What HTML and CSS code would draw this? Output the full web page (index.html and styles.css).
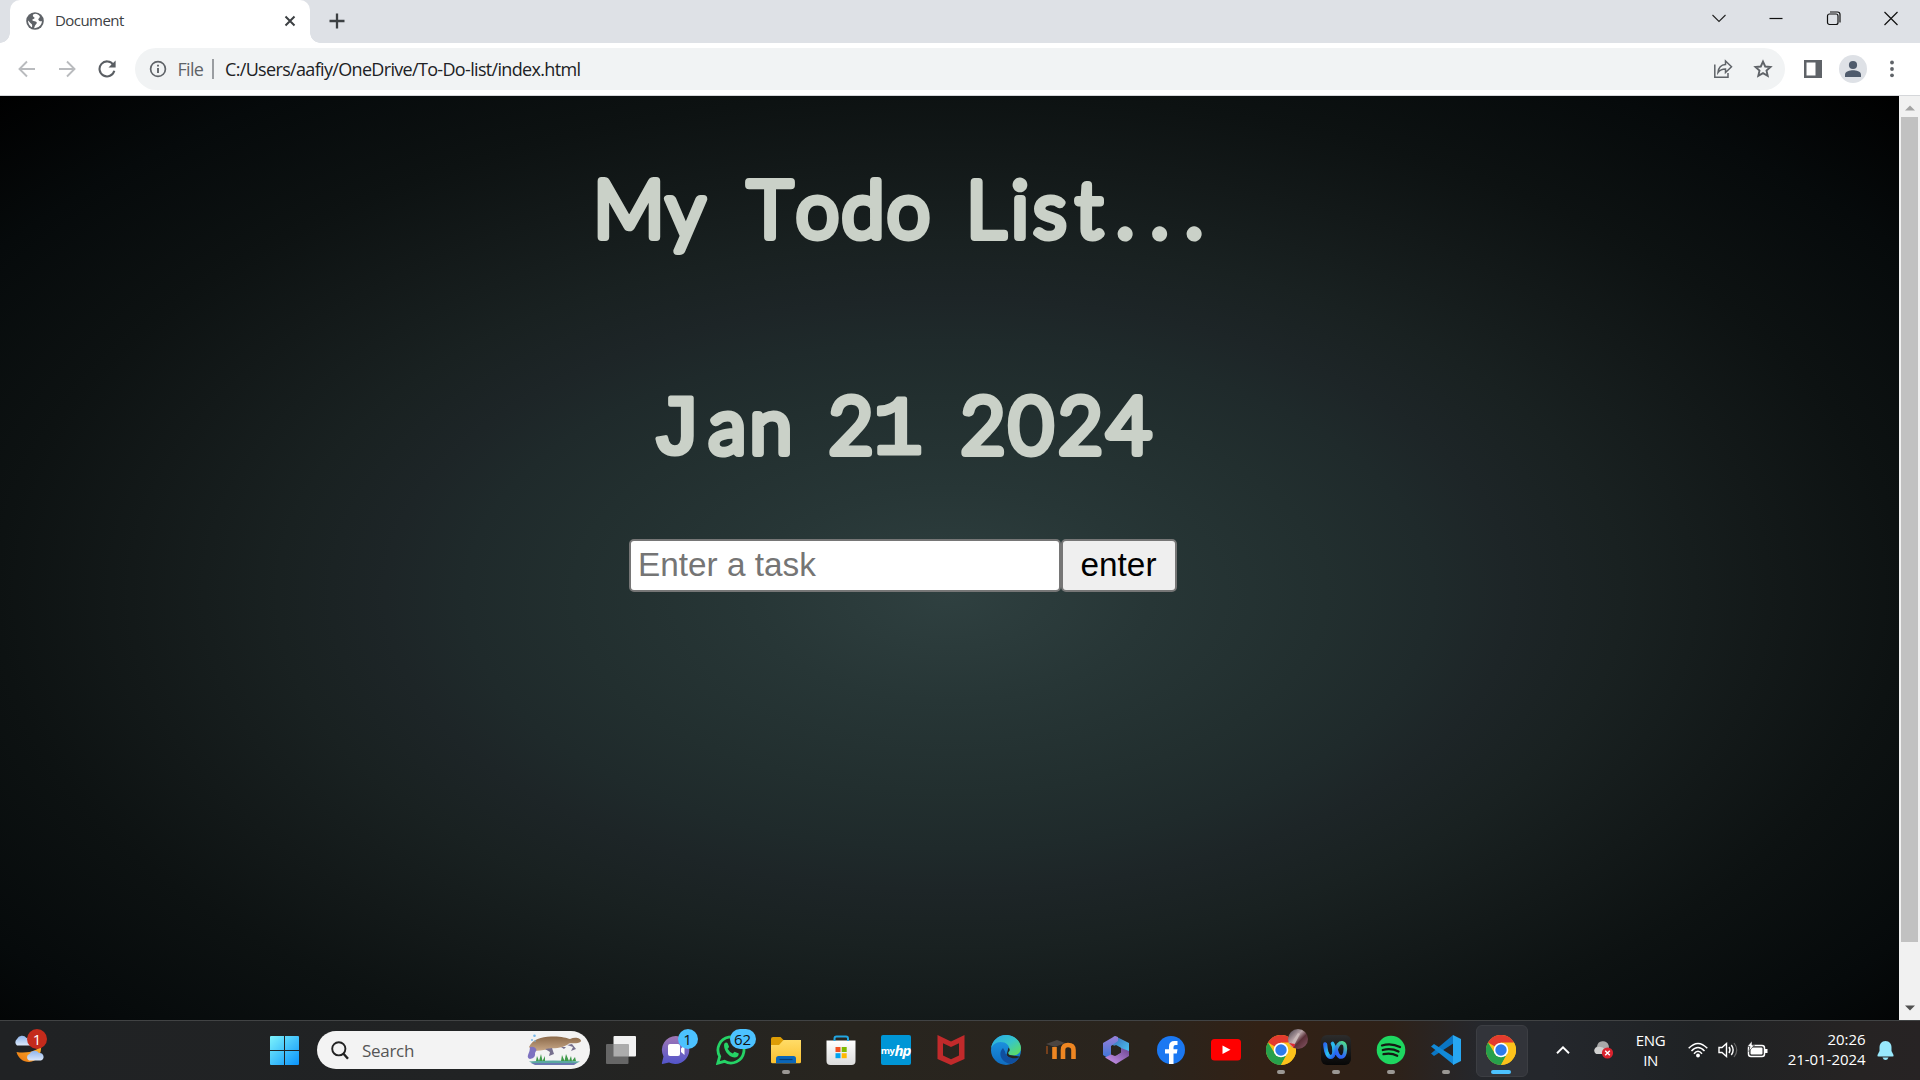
FILE: index.html
```html
<!DOCTYPE html>
<html lang="en">
<head>
<meta charset="utf-8">
<title>Document</title>
<link rel="stylesheet" href="styles.css">
</head>
<body>
<svg class="defs" width="0" height="0" aria-hidden="true">
  <defs>
    <linearGradient id="gWin" x1="0" y1="0" x2="1" y2="1"><stop offset="0" stop-color="#7df3fb"/><stop offset="1" stop-color="#0a93fb"/></linearGradient>
    <linearGradient id="gCloud" x1="0" y1="0" x2="0" y2="1"><stop offset="0" stop-color="#8eb4ea"/><stop offset="1" stop-color="#dce8fa"/></linearGradient>
    <linearGradient id="gMoon" x1="1" y1="0" x2="0" y2="1"><stop offset="0" stop-color="#ffb92e"/><stop offset="1" stop-color="#e87512"/></linearGradient>
    <linearGradient id="gTeams" x1="0" y1="0" x2="0" y2="1"><stop offset="0" stop-color="#a177b4"/><stop offset="1" stop-color="#5255cb"/></linearGradient>
    <linearGradient id="gFolder" x1="0" y1="0" x2="0" y2="1"><stop offset="0" stop-color="#ffdc68"/><stop offset="1" stop-color="#fbc02e"/></linearGradient>
    <linearGradient id="gStore" x1="0" y1="0" x2="0" y2="1"><stop offset="0" stop-color="#fff"/><stop offset="1" stop-color="#dcdcdc"/></linearGradient>
    <linearGradient id="gEdgeTop" x1="0" y1="0" x2="1" y2="1"><stop offset="0" stop-color="#28a8e8"/><stop offset=".5" stop-color="#37c6c8"/><stop offset="1" stop-color="#66e04c"/></linearGradient>
    <linearGradient id="gEdgeLeft" x1="0" y1="0" x2="0" y2="1"><stop offset="0" stop-color="#1e9be6"/><stop offset="1" stop-color="#0f6cc0"/></linearGradient>
    <linearGradient id="gOffL" x1="0" y1="0" x2="0" y2="1"><stop offset="0" stop-color="#9a7fd8"/><stop offset="1" stop-color="#3a76d8"/></linearGradient>
    <linearGradient id="gOffT" x1="0" y1="0" x2="1" y2="1"><stop offset="0" stop-color="#3a66b4"/><stop offset="1" stop-color="#4cc8f4"/></linearGradient>
    <linearGradient id="gOffB" x1="0" y1="1" x2="1" y2="0"><stop offset="0" stop-color="#d09af0"/><stop offset="1" stop-color="#6a4590"/></linearGradient>
    <linearGradient id="gTile" x1="0" y1="0" x2="0" y2="1"><stop offset="0" stop-color="#2c2c2c"/><stop offset="1" stop-color="#070707"/></linearGradient>
    <linearGradient id="gWebexA" x1="0" y1="0" x2="1" y2="1"><stop offset="0" stop-color="#2a6cf0"/><stop offset=".5" stop-color="#2ac4ea"/><stop offset="1" stop-color="#2458f0"/></linearGradient>
    <linearGradient id="gWebexB" x1="0" y1="1" x2="1" y2="0"><stop offset="0" stop-color="#2458f0"/><stop offset=".5" stop-color="#2f6cf6"/><stop offset="1" stop-color="#4fe08a"/></linearGradient>
    <linearGradient id="gAvatar" x1="0" y1="0" x2="1" y2="1"><stop offset="0" stop-color="#3a3540"/><stop offset=".4" stop-color="#b8a4a8"/><stop offset=".6" stop-color="#5a3038"/><stop offset="1" stop-color="#8a5a6a"/></linearGradient>
    <linearGradient id="gBody" x1="0" y1="0" x2="0" y2="1"><stop offset="0" stop-color="#8a6848"/><stop offset="1" stop-color="#c8a888"/></linearGradient>
    <symbol id="chrome" viewBox="0 0 30 30">
      <circle cx="15" cy="15" r="15" fill="#fbc116"/>
      <path d="M15 15 2 7.500A15 15 0 0 1 28 7.500Z" fill="#e33b2e"/>
      <path d="M2 7.500A15 15 0 0 0 15 30L21.200 18.600 15 15 8.900 18.600Z" fill="#27a04b"/>
      <path d="M15 7.500H28A15 15 0 0 1 15 30L21.500 18.700Z" fill="#fcc21b"/>
      <circle cx="15" cy="15" r="7.300" fill="#fff"/><circle cx="15" cy="15" r="5.700" fill="#2d7bea"/>
    </symbol>
  </defs>
</svg>

<div class="screen">
  <header class="tabstrip">
    <div class="tab">
      <svg class="globe" width="18" height="18" viewBox="0 0 18 18"><circle cx="9" cy="9" r="8.800" fill="#5f6368"/><path d="M9.500 1.800C6.500 2 6.200 4 8 5.300 9.500 6.300 7.800 7 6.500 7.500 5.500 8 7 9 8.800 9.200 11 9.500 11.500 11 10 12.200 8.500 13.400 9 14.500 8 16.200 12.500 16 16 13 15.900 9 15 9.500 13.200 9.500 12.500 8 11.800 6.500 14 6.500 13.800 4.300 12.800 3 11 2 9.500 1.800ZM2 8.500C2 11.500 4 14.500 6 15.300 6.300 13.500 6.500 12.600 5 11.500 3.600 10.400 3.500 9.300 2 8.500Z" fill="#fff"/></svg>
      <span class="tab-title">Document</span>
      <svg class="tab-close" width="12" height="12" viewBox="0 0 12 12"><path d="M1.500 1.500 10.500 10.500M10.500 1.500 1.500 10.500" stroke="#3c4043" stroke-width="2"/></svg>
    </div>
    <svg class="newtab" width="16" height="16" viewBox="0 0 16 16"><path d="M8 .5V15.500M.5 8H15.500" stroke="#3c4043" stroke-width="2.300"/></svg>
    <div class="winbtns">
      <svg width="16" height="16" viewBox="0 0 16 16"><path d="M1.500 5 8 11.500 14.500 5" fill="none" stroke="#222" stroke-width="1.100"/></svg>
      <svg width="16" height="16" viewBox="0 0 16 16"><path d="M1.500 8.500H14.500" stroke="#111" stroke-width="1.200"/></svg>
      <svg width="16" height="16" viewBox="0 0 16 16"><rect x="1.500" y="4" width="10.500" height="10.500" rx="2" fill="none" stroke="#111" stroke-width="1.200"/><path d="M4 2H11.500Q14 2 14 4.500V12.500" fill="none" stroke="#111" stroke-width="1.200"/></svg>
      <svg width="16" height="16" viewBox="0 0 16 16"><path d="M1.500 2 14.500 15M14.500 2 1.500 15" stroke="#111" stroke-width="1.200"/></svg>
    </div>
  </header>

  <div class="toolbar">
    <svg class="nav" width="18" height="18" viewBox="0 0 18 18"><path d="M17 9H2M9 1.500 1.500 9 9 16.500" fill="none" stroke="#b9bbbe" stroke-width="1.900"/></svg>
    <svg class="nav" width="18" height="18" viewBox="0 0 18 18"><path d="M1 9H16M9 1.500 16.500 9 9 16.500" fill="none" stroke="#b9bbbe" stroke-width="1.900"/></svg>
    <svg class="nav" width="18" height="18" viewBox="0 0 18 18"><path d="M15.300 4.800A7.500 7.500 0 1 0 16.300 10.800" fill="none" stroke="#5a5e63" stroke-width="2.100"/><path d="M17.600.5V7.600H10.500Z" fill="#5a5e63"/></svg>
    <div class="omnibox">
      <svg width="18" height="18" viewBox="0 0 18 18"><circle cx="9" cy="9" r="7.400" fill="none" stroke="#5f6368" stroke-width="1.700"/><path d="M9 8V13M9 4.800V6.600" stroke="#5f6368" stroke-width="1.900"/></svg>
      <span class="scheme">File</span>
      <span class="bar"></span>
      <span class="url">C:/Users/aafiy/OneDrive/To-Do-list/index.html</span>
      <svg class="share" width="20" height="20" viewBox="0 0 20 20"><path d="M1.800 5.500V18.200H15V14" fill="none" stroke="#5f6368" stroke-width="1.500"/><path d="M5 13.500C5.500 8.500 8 5.900 12.500 5.600V2L18.500 7.800 12.500 13.500V9.900C9.500 9.900 7 10.800 5 13.500Z" fill="none" stroke="#5f6368" stroke-width="1.500"/></svg>
      <svg class="star" width="20" height="20" viewBox="0 0 20 20"><path d="M10 2.600 12.200 7.500 17.500 8 13.500 11.600 14.700 16.900 10 14.100 5.300 16.900 6.500 11.600 2.500 8 7.800 7.500Z" fill="none" stroke="#5f6368" stroke-width="1.900"/></svg>
    </div>
    <svg class="panel" width="18" height="18" viewBox="0 0 18 18"><path fill-rule="evenodd" d="M0 0H18V18H0ZM2.500 2.500V15.500H11.500V2.500Z" fill="#5f6368"/></svg>
    <svg class="avatar" width="28" height="28" viewBox="0 0 28 28"><circle cx="14" cy="14" r="14" fill="#dee1e6"/><circle cx="14" cy="10" r="4.100" fill="#4f5b6c"/><path d="M6 22V19.500C6 16.500 11 15.300 14 15.300S22 16.500 22 19.500V22Z" fill="#4f5b6c"/></svg>
    <svg class="dots" width="4" height="18" viewBox="0 0 4 18"><g fill="#5f6368"><circle cx="2" cy="2.500" r="1.900"/><circle cx="2" cy="9" r="1.900"/><circle cx="2" cy="15.300" r="1.900"/></g></svg>
  </div>

  <div class="viewport">
    <main class="page">
      <h1 class="title"><svg width="640" height="130" viewBox="580 160 640 130"><text class="hand" y="236.500" x="629 685.500 720 770 817.500 863 908.500 940 986 1020 1050 1089 1125 1159.500 1194"><tspan class="em">M</tspan>y Todo List...</text></svg></h1>
      <h2 class="date"><svg width="640" height="130" viewBox="580 380 640 130"><text class="hand" y="453" x="676 727.500 771 800 851 898 930 983 1031 1080.500 1129"><tspan class="barred">J</tspan>an 2<tspan class="barred one">1</tspan> 2024</text></svg></h2>
      <div class="form">
        <input class="task" type="text" placeholder="Enter a task">
        <button class="enter">enter</button>
      </div>
    </main>
    <div class="scrollbar">
      <svg width="10" height="6" viewBox="0 0 10 6"><path d="M0 5.500 5 .5 10 5.500Z" fill="#a3a3a3"/></svg>
      <div class="thumb"></div>
      <svg class="down" width="10" height="6" viewBox="0 0 10 6"><path d="M0 .5 5 5.500 10 .5Z" fill="#505050"/></svg>
    </div>
  </div>

  <footer class="taskbar">
    <div class="widgets">
      <svg width="36" height="36" viewBox="0 0 36 36"><path d="M29 12C27 17 17 21 4.500 19 6 25 11 29 17 29 25 28.500 30 21 29 12Z" fill="url(#gMoon)"/><path d="M5 12.500A4 4 0 0 1 5 6 5.500 5.500 0 0 1 14.500 5 4 4 0 0 1 18 12.500Z" fill="url(#gCloud)"/><path d="M17 27.500A3.500 3.500 0 0 1 17.500 21 5.500 5.500 0 0 1 27 20 3.900 3.900 0 0 1 29 27.500Z" fill="url(#gCloud)"/></svg>
      <span class="badge red">1</span>
    </div>
    <div class="start"><svg width="29" height="29" viewBox="0 0 29 29"><path d="M1 0H14V14H0V1Q0 0 1 0ZM15 0H28Q29 0 29 1V14H15ZM0 15H14V29H1Q0 29 0 28ZM15 15H29V28Q29 29 28 29H15Z" fill="url(#gWin)"/></svg></div>
    <div class="search">
      <svg width="18" height="19" viewBox="0 0 18 19"><circle cx="7.800" cy="7.800" r="6.600" fill="none" stroke="#222" stroke-width="1.900"/><path d="M12.500 12.800 17 17.800" stroke="#222" stroke-width="2.400"/></svg>
      <span class="search-text">Search</span>
      <svg class="platypus" width="56" height="32" viewBox="0 0 56 32"><path d="M4 29H50L47 31H8Z" fill="#6a78b0"/><path d="M2 27.500Q25 25.500 53 27.500L50 29H5Z" fill="#5aa8a0"/><path d="M9 27 10 22 12 27 14 20 15.500 27 18 22 18 27ZM34 27 35 21 37.500 27 39 20 42 27 44 22 45 27 48 23 49 27Z" fill="#3f9a4a"/><path d="M2 13C6 5 14 3 24 2.500 33 2 40 4 43 5 48 2.500 54 4 54 7 53 10 46 9 42 9.500 37 14 29 14 24 14.500 17 16 10 18 5 16Z" fill="url(#gBody)"/><path d="M3 13Q8 12 9.500 16L8 19Q9 24 3 25 0 24 1 21Q3 17 3 13Z" fill="#7d72c0"/><path d="M18 15 23 18 22 22 27 20 25 14ZM40 11 46 13 44 17 49 15 45 10ZM34 13 37 15 39 13Z" fill="#77708e"/><circle cx="5" cy="6" r="1" fill="#78b8e8"/><circle cx="7.500" cy="1.800" r="1.300" fill="#78b8e8"/><circle cx="8" cy="7" r=".8" fill="#78b8e8"/></svg>
    </div>
    <nav class="apps">
      <div class="app taskview"><svg width="30" height="28" viewBox="0 0 30 28"><rect x="7.500" y="0" width="22.500" height="20.500" rx="1" fill="#f2f2f2"/><rect x="0" y="8" width="22.500" height="20" rx="1" fill="#666"/><path d="M7.500 8H22.500V20.500H7.500Z" fill="#acacac"/></svg></div>
      <div class="app"><svg width="30" height="30" viewBox="0 0 30 30"><path d="M15 1A14 14 0 1 1 8 27.500L1.500 29Q.5 29 1 27.500L2.500 21.500A14 14 0 0 1 15 1Z" fill="url(#gTeams)"/><rect x="7" y="9" width="12" height="12" rx="2" fill="#fff"/><path d="M20 13.500 23.500 10.500V20L20 17Z" fill="#fff"/></svg><span class="badge blue">1</span></div>
      <div class="app"><svg width="30" height="30" viewBox="0 0 30 30"><path d="M1.800 28.200 3.700 21.500A13 13 0 1 1 8.500 26.300Z" fill="none" stroke="#25d366" stroke-width="2.800"/><path d="M8.200 8.700Q10 6.700 11.500 8L13 11.500Q13 12.700 11.600 13.800 13.500 17.300 16.800 18.500L18.500 16.700 22.800 18.600Q22.500 22.500 18.500 22.500C12 22 7 14 8.200 8.700Z" fill="#25d366"/></svg><span class="badge blue wide">62</span></div>
      <div class="app run"><svg width="30" height="30" viewBox="0 0 30 30"><path d="M0 4Q0 2 2 2H9.500L13 5.500V12H0Z" fill="#dd9d05"/><path d="M0 10H8L12.500 5H30V27Q30 28.300 28.500 28.300H1.500Q0 28.300 0 27Z" fill="url(#gFolder)"/><path d="M5 28.300V23.500Q5 21 7.500 21H22.500Q25 21 25 23.500V28.300Z" fill="#0b66b8"/><path d="M8.500 24.500H21.500" stroke="#053d78" stroke-width="1.200"/></svg></div>
      <div class="app"><svg width="30" height="30" viewBox="0 0 30 30"><path d="M.5 5.500H29.500V26Q29.500 30 25.500 30H4.500Q.5 30 .5 26Z" fill="url(#gStore)"/><path d="M8.500 6V3.500Q8.500 1.500 10.500 1.500H20Q22 1.500 22 3.500V6" fill="none" stroke="#22a6e2" stroke-width="2"/><path d="M9.500 12H14.500V17H9.500Z" fill="#f25022"/><path d="M15.700 12H20.700V17H15.700Z" fill="#7fba00"/><path d="M9.500 18.200H14.500V23.200H9.500Z" fill="#00a4ef"/><path d="M15.700 18.200H20.700V23.200H15.700Z" fill="#ffb900"/></svg></div>
      <div class="app"><div class="hp"><span class="my">my</span><span>hp</span></div></div>
      <div class="app"><svg width="30" height="30" viewBox="0 0 30 30"><path fill-rule="evenodd" d="M1.500 0 15 6.500 28.500 0V24L15 30 1.500 24ZM7 8.300V20.500L15 24.300 23 20.500V8.300L15 12Z" fill="#c12a2b"/></svg></div>
      <div class="app"><svg width="30" height="30" viewBox="0 0 30 30"><circle cx="15" cy="15" r="15" fill="url(#gEdgeLeft)"/><path d="M0 14C1 5 8 0 15 0 24 0 30 7 30 13 30 18 26 20.500 22 20.500 18 20.500 16.500 18.500 17.500 17 20 13 17 7 9.500 7 5 7 1 10 0 14Z" fill="url(#gEdgeTop)"/><path d="M17.500 12.500Q20 15 17.500 17 16.500 18.500 18.500 20L28.500 21.500 27 24Q20 26 15.500 20Z" fill="#28251f"/><path d="M12 13C6 19 11 28 20 29 24 27.500 27 25 28.500 22 24 24.500 15 23.500 14 16.500Z" fill="#104f9f"/></svg></div>
      <div class="app"><svg class="soft" width="30" height="30" viewBox="0 0 30 30"><path d="M0 9 11 5 19 8 9 12Z" fill="#4b4542"/><path d="M1 11V19" stroke="#75401c" stroke-width="2"/><path d="M8.500 24V12M17 24V15Q17 10 22 10 27.500 10 27.500 15V24" fill="none" stroke="#ee8622" stroke-width="4.600"/></svg></div>
      <div class="app"><svg width="30" height="30" viewBox="0 0 30 30"><path d="M14 1 28 8V18L20 18.500V13L10 9.500 12 2Z" fill="url(#gOffT)"/><path d="M14 1 2 8V20L7.500 23.500 10 21V11L17 6V2Z" fill="url(#gOffL)"/><path d="M28 16V21L15 29 4 22.500 10 19.500 14 21 20 17.500V13Z" fill="url(#gOffB)"/><path d="M15 10 19.500 12.500V17.500L15 20.500 10.500 17.500V12.500Z" fill="#28251f"/></svg></div>
      <div class="app"><svg width="30" height="30" viewBox="0 0 30 30"><circle cx="15" cy="15" r="14" fill="#1b78f2"/><path d="M13 29V18.500H9V14.200H13V11.500Q13 6 18.500 6H21.500V10H19.500Q17.500 10 17.500 12V14.200H21.500L20.800 18.500H17.500V29Z" fill="#fff"/></svg></div>
      <div class="app"><svg width="30" height="30" viewBox="0 0 30 30"><rect x="0" y="4" width="30" height="21.500" rx="3.500" fill="#f00"/><path d="M11.500 10.500V19L19.500 14.700Z" fill="#fff"/></svg></div>
      <div class="app run"><svg width="30" height="30"><use href="#chrome"/></svg><svg class="profile" width="20" height="20" viewBox="0 0 20 20"><circle cx="10" cy="10" r="10" fill="url(#gAvatar)"/><path d="M2 16 10 4 12 5 5 18.500Z" fill="#c8b8b8"/><path d="M1 14 7 15 6 19Z" fill="#e02a32"/></svg></div>
      <div class="app run"><svg width="30" height="30" viewBox="0 0 30 30"><rect width="30" height="30" rx="6" fill="url(#gTile)"/><path d="M15 12C15 17 17 22 20 22 24 22 25 15 24 10.500 23 7 19.500 7 17.500 9.500 14.500 13 14 22 9.500 22 6 22 4.500 16 4 9" fill="none" stroke="url(#gWebexB)" stroke-width="3.600" stroke-linecap="round"/><path d="M4.500 9.500C4.500 14 6 22 10 22 13.500 22 14 12 11.500 8.500" fill="none" stroke="url(#gWebexA)" stroke-width="3.600" stroke-linecap="round"/></svg></div>
      <div class="app run"><svg width="30" height="30" viewBox="0 0 30 30"><circle cx="15" cy="15" r="14.300" fill="#1ed760"/><path d="M6 10.500Q15 7.500 24 12M6.800 15Q15 12.700 22.500 16.500M7.500 19.200Q15 17.500 21.200 20.700" fill="none" stroke="#141a14" stroke-width="2.300" stroke-linecap="round"/></svg></div>
      <div class="app run"><svg width="30" height="30" viewBox="0 0 30 30"><path d="M22 0 0 18.500 3 21 23 8Z" fill="#0b76c4"/><path d="M0 11.500 3 9 23 22V30Z" fill="#128ad8"/><path d="M22 0 30 4V26L22 30Z" fill="#27a7f2"/></svg></div>
      <div class="app run active"><svg width="30" height="30"><use href="#chrome"/></svg></div>
    </nav>
    <div class="tray">
      <svg class="chev" width="14" height="8" viewBox="0 0 14 8"><path d="M1 7.200 7 1.300 13 7.200" fill="none" stroke="#fff" stroke-width="1.900"/></svg>
      <svg class="cloud" width="21" height="18" viewBox="0 0 21 18"><path d="M4 13A4 4 0 0 1 4 5.500 6 6 0 0 1 15.500 4Q17 8 13 13Z" fill="#a8a8a8"/><path d="M3.500 13A3.500 3.500 0 0 1 3.500 6.500Q8 4 13 9V13Z" fill="#d0d0d0"/><circle cx="14.500" cy="12" r="5.600" fill="#d9232e"/><path d="M12.200 9.700 16.800 14.300M16.800 9.700 12.200 14.300" stroke="#fff" stroke-width="1.400"/></svg>
      <div class="lang"><span>ENG</span><span>IN</span></div>
      <svg class="wifi" width="20" height="16" viewBox="0 0 20 16"><g fill="none" stroke="#fff" stroke-width="1.500"><path d="M.7 6.300Q10-3.500 19.300 6.300"/><path d="M3.500 9Q10 2 16.500 9"/><path d="M6 11.700Q10 7 14 11.700"/></g><circle cx="10" cy="13.500" r="1.900" fill="#fff"/></svg>
      <svg class="vol" width="20" height="16" viewBox="0 0 20 16"><path d="M1 5.500H4L8.500 1.500V14.500L4 10.500H1Z" fill="none" stroke="#fff" stroke-width="1.400"/><path d="M11 5Q13 8 11 11M13.300 3Q17 8 13.300 13" fill="none" stroke="#fff" stroke-width="1.400"/><path d="M16 1Q21.500 8 16 15" fill="none" stroke="#666" stroke-width="1.200"/></svg>
      <svg class="batt" width="21" height="18" viewBox="0 0 21 18"><rect x="1.500" y="4.500" width="16" height="11" rx="2.500" fill="none" stroke="#fff" stroke-width="1.500"/><rect x="3.500" y="6.500" width="12" height="7" rx="1" fill="#fff"/><path d="M18 8H20.500V12H18Z" fill="#fff"/><path d="M5 0 .3 5.500H3L1.800 10.500 7.500 4H5Z" fill="#fff" stroke="#212325" stroke-width=".6"/></svg>
      <div class="clock"><span>20:26</span><span>21-01-2024</span></div>
      <svg class="bell" width="17" height="19" viewBox="0 0 17 19"><path d="M8.500 0C4.500 0 2.500 3 2.500 6.500V10L.5 14Q0 15.500 1.500 15.500H15.500Q17 15.500 16.500 14L14.500 10V6.500C14.500 3 12.500 0 8.500 0ZM5.500 16.500H11.500Q10.500 19 8.500 19T5.500 16.500Z" fill="#98e8fc"/></svg>
    </div>
  </footer>
</div>
</body>
</html>
```
FILE: styles.css
```css
* { box-sizing: border-box; }
body { margin: 0; overflow: hidden; font-family: "Open Sans", "Noto Sans", sans-serif; }
svg { display: block; flex: none; }
.defs { position: absolute; }
.screen { width: 1920px; height: 1080px; display: flex; flex-direction: column; }

/* Browser tab strip */
.tabstrip { height: 43px; flex: none; background: #dee1e6; display: flex; align-items: flex-start; padding-left: 10px; }
.tab { width: 300px; height: 43px; background: #fff; border-radius: 10px 10px 0 0; display: flex; align-items: center; padding: 0 14px 1px 16px; position: relative; }
.tab::before, .tab::after { content: ""; position: absolute; bottom: 0; width: 10px; height: 10px; }
.tab::before { left: -10px; background: radial-gradient(circle at 0 0, transparent 9.5px, #fff 10px); }
.tab::after { right: -10px; background: radial-gradient(circle at 100% 0, transparent 9.5px, #fff 10px); }
.tab-title { margin-left: 11px; font-size: 15px; letter-spacing: -.55px; color: #3c4043; line-height: 20px; padding-bottom: 3px; }
.tab-close { margin-left: auto; }
.newtab { margin: 13px 0 0 19px; }
.winbtns { margin-left: auto; display: flex; gap: 41.500px; padding: 10px 21px 0 0; }

/* Toolbar */
.toolbar { height: 53px; flex: none; background: #fff; border-bottom: 1px solid #d5d7da; display: flex; align-items: center; padding: 0 22px 0 18px; }
.nav { margin-right: 22px; }
.omnibox { width: 1650px; height: 42px; margin-left: -3px; border-radius: 21px; background: #f1f3f4; display: flex; align-items: center; padding: 0 12.500px 0 14px; font-size: 18px; }
.scheme { margin-left: 10.500px; width: 26.500px; color: #5f6368; letter-spacing: -.7px; }
.bar { width: 2px; height: 20px; margin-left: 8px; background: #9a9da1; }
.url { margin-left: 11px; color: #202124; letter-spacing: -.67px; white-space: nowrap; }
.share { margin-left: auto; }
.star { margin-left: 20px; }
.panel { margin-left: 18.500px; }
.avatar { margin-left: 17px; }
.dots { margin-left: auto; margin-right: 4px; }

/* Page */
.viewport { height: 924px; flex: none; display: flex; }
.page { flex: 1; overflow: hidden; background: radial-gradient(ellipse farthest-corner at 50% 50%, #2f4040, #273636 15%, #222f2f 28%, #1f2a2b 36%, #1d2527 42%, #192121 50%, #131919 61%, #0d1212 71%, #060a0b 86%, #000) 0 0 / 100% 997px no-repeat; padding: 64px 0 0 580px; }
.title, .date { margin: 0; }
.title { height: 220px; }
.date { height: 159px; }
.title svg, .date svg { overflow: visible; }
.hand { font-family: Lato, sans-serif; font-weight: 300; font-size: 76px; fill: #cad1c8; stroke: #cad1c8; stroke-width: 8px; stroke-linejoin: round; stroke-linecap: round; text-anchor: middle; }
.em { font-size: 78px; }
.barred { font-family: "Liberation Mono", monospace; font-weight: 400; font-size: 84px; stroke-width: 5px; }
.one { font-size: 82px; }
.form { display: flex; margin-left: 49px; }
.task, .enter { height: 53px; border: 2px solid #767676; border-radius: 5px; font-family: "Liberation Sans", Arial, sans-serif; font-size: 33.330px; margin: 0; }
.task { width: 432px; padding: 0 7px 1px; background: #fff; }
.task::placeholder { color: #757575; opacity: 1; }
.enter { width: 116px; padding: 0 1px 1px 0; background: #efefef; color: #000; }
.scrollbar { width: 21px; background: #f1f1f1; display: flex; flex-direction: column; align-items: center; padding: 9px 0; }
.thumb { width: 17px; height: 825px; margin-top: 6px; background: #c1c1c1; }
.down { margin-top: auto; }

/* Taskbar */
.taskbar { height: 60px; flex: none; display: flex; align-items: center; box-shadow: inset 0 1px #414344; color: #fff; background: linear-gradient(90deg, #202224 0, #212324 500px, #28251f 850px, #2a241d 1150px, #322115 1260px, #2e2118 1390px, #25272c 1480px, #24272c 1550px, #1f2224 1700px, #262323 1860px, #272324 1920px); }
.widgets { width: 60px; height: 60px; position: relative; padding: 13px 0 0 12px; }
.start { margin-left: 210px; padding-top: 1px; }
.search { width: 273px; height: 38px; margin-left: 18px; border-radius: 19px; background: #f3f3f3; display: flex; align-items: center; padding: 0 7px 0 14px; color: #555; font-size: 17px; }
.search-text { margin-left: 13px; letter-spacing: -.3px; }
.platypus { margin-left: auto; }
.apps { display: flex; margin-left: 3.500px; }
.app { width: 55px; height: 60px; display: flex; align-items: center; justify-content: center; position: relative; }
.run::after { content: ""; position: absolute; left: 23.500px; top: 50px; width: 8px; height: 4px; border-radius: 2px; background: #9b9894; }
.active::before { content: ""; position: absolute; left: 2px; top: 5px; width: 50px; height: 50px; border-radius: 6px; background: #32343a; border: 1px solid #3c3e43; }
.active svg { position: relative; }
.active::after { left: 17.500px; width: 20px; background: #4cc2ff; }
.badge { position: absolute; display: flex; align-items: center; justify-content: center; height: 20px; min-width: 20px; border-radius: 10px; font-size: 15px; line-height: 20px; }
.red { left: 27px; top: 9px; background: #c42b1c; color: #fff; }
.blue { left: 29px; top: 9px; background: #4cc2ff; color: #111; }
.wide { left: 26px; width: 26px; }
.profile { position: absolute; left: 34px; top: 9px; }
.hp { width: 30px; height: 30px; border-radius: 2px; background: #0096d6; display: flex; align-items: center; justify-content: center; font: italic 700 15px "Open Sans", sans-serif; letter-spacing: -1px; padding-right: 1px; }
.my { font-size: 9.500px; font-style: normal; letter-spacing: -.5px; }
.soft { filter: blur(.6px); }
.tray { margin-left: auto; display: flex; align-items: center; width: 366px; padding-left: 2px; }
.cloud { margin-left: 22.500px; }
.lang, .clock { display: flex; flex-direction: column; font-size: 15px; line-height: 20px; }
.lang { width: 40px; margin-left: 17px; align-items: center; letter-spacing: -.4px; }
.wifi { margin-left: 17px; }
.vol { margin-left: 10px; }
.batt { margin-left: 9.500px; }
.clock { width: 86px; margin-left: 11.500px; align-items: flex-end; letter-spacing: -.05px; padding-bottom: 2px; }
.bell { margin-left: 11px; }
```
